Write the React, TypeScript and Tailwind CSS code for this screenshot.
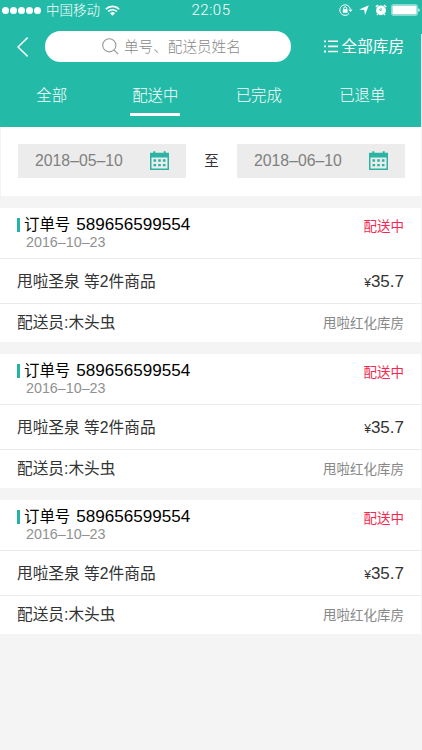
import { useState } from 'react';

const TABS = ['全部', '配送中', '已完成', '已退单'];

const orders = [
  { id: 1, orderNo: '589656599554', date: '2016–10–23', status: '配送中', goods: '甩啦圣泉 等2件商品', price: '35.7', courier: '木头虫', store: '甩啦红化库房' },
  { id: 2, orderNo: '589656599554', date: '2016–10–23', status: '配送中', goods: '甩啦圣泉 等2件商品', price: '35.7', courier: '木头虫', store: '甩啦红化库房' },
  { id: 3, orderNo: '589656599554', date: '2016–10–23', status: '配送中', goods: '甩啦圣泉 等2件商品', price: '35.7', courier: '木头虫', store: '甩啦红化库房' },
];

type Order = (typeof orders)[number];

function StatusBar() {
  return (
    <div className="grid h-5 grid-cols-[1fr_auto_1fr] items-center pl-[2px] pr-[2px]">
      <div className="flex items-center">
        <div className="flex gap-[1px]">
          {[0, 1, 2, 3, 4].map(i => (
            <span key={i} className="h-[7px] w-[7px] rounded-full bg-white" />
          ))}
        </div>
        <span className="ml-[5px] pt-[2px] text-[13.5px] leading-[18px] font-light">中国移动</span>
        <svg className="ml-[5px]" width="15" height="11" viewBox="0 0 15 11" fill="none" stroke="white" strokeWidth="1.6">
          <path d="M.8 4.1a9.6 9.6 0 0 1 13.4 0" />
          <path d="M3.1 6.5a6.3 6.3 0 0 1 8.8 0" />
          <path d="M7.5 10.8 5 8.3a3.6 3.6 0 0 1 5 0z" fill="white" stroke="none" />
        </svg>
      </div>
      <span className="font-[Roboto] text-[15px] leading-5 font-light tracking-[0.5px]">22:05</span>
      <div className="flex items-center justify-end">
        <svg width="14" height="12" viewBox="0 0 14 12" fill="none" stroke="white" strokeWidth="1">
          <path d="M10.2 9.4A5.3 5.3 0 1 1 11.3 5.2" />
          <path d="M9.4 5.4h4.2l-2.1 2.7z" fill="white" stroke="none" />
          <rect x="3.8" y="5.2" width="4.8" height="3.6" fill="white" stroke="none" />
          <path d="M4.8 5.3V4.2a1.4 1.4 0 0 1 2.8 0v1.1" />
        </svg>
        <svg className="ml-[6px]" width="10" height="10" viewBox="0 0 10 10" fill="white">
          <path d="M9.8.2 6 9.9 5.3 5.1.2 4.6z" />
        </svg>
        <svg className="ml-[6px]" width="12" height="12" viewBox="0 0 12 12" fill="none">
          <circle cx="6" cy="6.4" r="4.9" fill="white" />
          <path d="M.9 3 3 1M11.1 3 9 1" stroke="white" strokeWidth="1.7" />
          <path d="M2.7 10.2l-.8 1M9.3 10.2l.8 1" stroke="white" strokeWidth="1.2" />
          <path d="M4.2 5.4 6 7V4" stroke="#23bba7" strokeWidth=".8" />
        </svg>
        <svg className="ml-[4px]" width="29" height="12" viewBox="0 0 29 12" fill="none">
          <rect x=".6" y=".6" width="25.8" height="10.8" rx="1.6" stroke="white" strokeOpacity=".5" />
          <rect x="1.4" y="1.4" width="24.2" height="9.2" rx=".5" fill="white" />
          <path d="M27.4 4.2c1.6.3 1.6 3.3 0 3.6z" fill="white" />
        </svg>
      </div>
    </div>
  );
}

function CalendarIcon() {
  return (
    <svg width="19" height="19" viewBox="0 0 19 19">
      <path fill="#2bb3a3" fillRule="evenodd" d="M0 1.8h3.3V.2h2v1.6h8.4V.2h2v1.6H19V19H0zM1.5 6.5v11h16v-11z" />
      <path
        fill="#2bb3a3"
        d="M3.5 8.3h2.6v2.4H3.5zM8.2 8.3h2.6v2.4H8.2zM12.9 8.3h2.6v2.4h-2.6zM3.5 12.9h2.6v2.4H3.5zM8.2 12.9h2.6v2.4H8.2zM12.9 12.9h2.6v2.4h-2.6z"
      />
    </svg>
  );
}

function DateField({ value }: { value: string }) {
  return (
    <button className="flex h-[34px] w-[168px] items-center justify-between bg-[#ececec] pb-[1px] pl-[17px] pr-[17px]">
      <span className="pt-[1px] text-[15.8px] text-[#808080]">{value}</span>
      <CalendarIcon />
    </button>
  );
}

function OrderCard({ order }: { order: Order }) {
  return (
    <div className="h-[134px] bg-white">
      <div className="flex h-[51px] justify-between border-b border-[#ebebeb] pl-[17px] pr-[17px]">
        <div>
          <div className="flex h-[26px] items-center pt-[7px] text-black">
            <span className="h-[14px] w-[3px] bg-[#23b5a3]" />
            <span className="ml-[4px] text-[15.4px]">订单号</span>
            <span className="ml-[6px] text-[17.1px]">{order.orderNo}</span>
          </div>
          <div className="ml-[9px] text-[14.3px] leading-[17px] text-[#909090]">{order.date}</div>
        </div>
        <span className="pt-[9px] text-[13.5px] leading-5 text-[#f5294f]">{order.status}</span>
      </div>
      <div className="flex h-[45px] items-center justify-between border-b border-[#ebebeb] pt-[2px] pl-[17px] pr-[17px] text-[#333]">
        <span className="text-[15.7px]">{order.goods}</span>
        <span className="text-[17px]">
          <span className="text-[12px]">¥</span>
          {order.price}
        </span>
      </div>
      <div className="flex h-[38px] items-center justify-between pl-[17px] pr-[17px]">
        <span className="text-[15.7px] text-[#333]">配送员:{order.courier}</span>
        <span className="pt-[2px] text-[13.5px] text-[#888]">{order.store}</span>
      </div>
    </div>
  );
}

export default function App() {
  const [activeTab, setActiveTab] = useState(1);

  return (
    <div className="h-[750px] w-[422px] overflow-hidden bg-[#f4f4f4] font-['Liberation_Sans','Noto_Sans_CJK_SC',sans-serif]">
      <header className="h-[127px] bg-[#23bba7] text-white">
        <StatusBar />

        {/* thin light edge runs down the right side below the status bar */}
        <div className="flex h-[107px]">
          <div className="flex-1">
            <div className="flex h-[53px] items-center pl-[17px] pr-[17px]">
              <svg width="12" height="20" viewBox="0 0 12 20" fill="none" stroke="white" strokeWidth="1.5">
                <path d="M10.6.6 1 10l9.6 9.4" />
              </svg>
              <div className="ml-[16px] flex h-[31px] w-[246px] items-center rounded-full bg-white pl-[57px] text-[#999]">
                <svg width="17" height="17" viewBox="0 0 17 17" fill="none" stroke="#999" strokeWidth="1.1">
                  <circle cx="7.3" cy="7.3" r="6.6" />
                  <path d="m12 12 4.2 4.2" />
                </svg>
                <span className="ml-[5px] pt-[2px] text-[14.6px] font-light text-[#888]">单号、配送员姓名</span>
              </div>
              <button className="ml-auto flex items-center">
                <svg width="14" height="13" viewBox="0 0 14 13" fill="white">
                  <path d="M0 .4h2v1.8H0zM0 5.5h2v1.8H0zM0 10.6h2v1.8H0zM4 .5h10v1.6H4zM4 5.6h10v1.6H4zM4 10.7h10v1.6H4z" />
                </svg>
                <span className="ml-[4px] pt-[1px] text-[15.6px]">全部库房</span>
              </button>
            </div>

            <nav className="grid w-[414px] grid-cols-4">
              {TABS.map((tab, i) => (
                <button key={tab} onClick={() => setActiveTab(i)} className="flex flex-col items-center">
                  <span className="h-[40px] pt-[11px] text-[15.4px] leading-6 font-light">{tab}</span>
                  {activeTab === i && <span className="h-[2.5px] w-[50px] bg-white" />}
                </button>
              ))}
            </nav>
          </div>
          <span className="mt-[14px] w-[1px] bg-[#e4f6f3]" />
        </div>
      </header>

      <div className="mr-[1px] ml-[1px] flex h-[69px] items-center justify-between bg-white pr-[16px] pb-[1px] pl-[17px]">
        <DateField value="2018–05–10" />
        <span className="pt-[2px] text-[14.5px] text-[#333]">至</span>
        <DateField value="2018–06–10" />
      </div>

      <div className="mt-[12px] mr-[1px] flex flex-col gap-[12px]">
        {orders.map(order => (
          <OrderCard key={order.id} order={order} />
        ))}
      </div>
    </div>
  );
}
